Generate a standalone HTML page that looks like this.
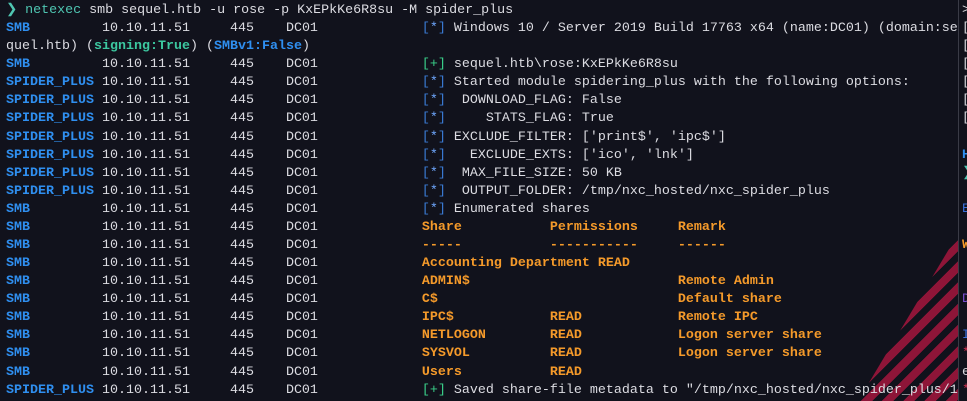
<!DOCTYPE html>
<html><head><meta charset="utf-8"><style>
html,body{margin:0;padding:0;background:#11121c;width:967px;height:401px;overflow:hidden}
pre{position:absolute;left:6px;top:2px;margin:0;font-family:"Liberation Mono",monospace;font-size:13.33px;line-height:18.08px;color:#dcdce2;z-index:2;white-space:pre}
.b{color:#2f8ff0;font-weight:bold}
.k{color:#3a7bd5}.s{color:#6fa8ff}
.g{color:#3ad08a}
.t{color:#3cc8a0;font-weight:bold}
.o{color:#f59a2a;font-weight:bold}
.p{color:#4fc6b2}
#stripes{position:absolute;left:858px;top:234px;width:100px;height:167px;clip-path:polygon(0 100%,100% 0,100% 100%);background:repeating-linear-gradient(135deg,#8e1538 0 8px,#11121c 8px 15px);z-index:1}
#div{position:absolute;left:958px;top:0;width:1px;height:401px;background:#3a3b46}
#sb{position:absolute;left:955px;top:240px;width:3px;height:52px;background:#8a8a90}
#r{position:absolute;left:962px;top:2px;font-family:"Liberation Mono",monospace;font-size:13.33px;line-height:18.08px;color:#d6d6dc;white-space:pre;margin:0}
</style></head><body>
<div id="stripes"></div><div id="div"></div><div id="sb"></div>
<pre><span class="p">❯</span> <span class="p">netexec</span> smb sequel.htb -u rose -p KxEPkKe6R8su -M spider_plus
<span class="b">SMB</span>         10.10.11.51     445    DC01             <span class="k">[</span><span class="s">*</span><span class="k">]</span> Windows 10 / Server 2019 Build 17763 x64 (name:DC01) (domain:se
quel.htb) (<span class="t">signing:True</span>) (<span class="b">SMBv1:False</span>)
<span class="b">SMB</span>         10.10.11.51     445    DC01             <span class="g">[+]</span> sequel.htb\rose:KxEPkKe6R8su
<span class="b">SPIDER_PLUS</span> 10.10.11.51     445    DC01             <span class="k">[</span><span class="s">*</span><span class="k">]</span> Started module spidering_plus with the following options:
<span class="b">SPIDER_PLUS</span> 10.10.11.51     445    DC01             <span class="k">[</span><span class="s">*</span><span class="k">]</span>  DOWNLOAD_FLAG: False
<span class="b">SPIDER_PLUS</span> 10.10.11.51     445    DC01             <span class="k">[</span><span class="s">*</span><span class="k">]</span>     STATS_FLAG: True
<span class="b">SPIDER_PLUS</span> 10.10.11.51     445    DC01             <span class="k">[</span><span class="s">*</span><span class="k">]</span> EXCLUDE_FILTER: ['print$', 'ipc$']
<span class="b">SPIDER_PLUS</span> 10.10.11.51     445    DC01             <span class="k">[</span><span class="s">*</span><span class="k">]</span>   EXCLUDE_EXTS: ['ico', 'lnk']
<span class="b">SPIDER_PLUS</span> 10.10.11.51     445    DC01             <span class="k">[</span><span class="s">*</span><span class="k">]</span>  MAX_FILE_SIZE: 50 KB
<span class="b">SPIDER_PLUS</span> 10.10.11.51     445    DC01             <span class="k">[</span><span class="s">*</span><span class="k">]</span>  OUTPUT_FOLDER: /tmp/nxc_hosted/nxc_spider_plus
<span class="b">SMB</span>         10.10.11.51     445    DC01             <span class="k">[</span><span class="s">*</span><span class="k">]</span> Enumerated shares
<span class="b">SMB</span>         10.10.11.51     445    DC01             <span class="o">Share           Permissions     Remark</span>
<span class="b">SMB</span>         10.10.11.51     445    DC01             <span class="o">-----           -----------     ------</span>
<span class="b">SMB</span>         10.10.11.51     445    DC01             <span class="o">Accounting Department READ</span>
<span class="b">SMB</span>         10.10.11.51     445    DC01             <span class="o">ADMIN$                          Remote Admin</span>
<span class="b">SMB</span>         10.10.11.51     445    DC01             <span class="o">C$                              Default share</span>
<span class="b">SMB</span>         10.10.11.51     445    DC01             <span class="o">IPC$            READ            Remote IPC</span>
<span class="b">SMB</span>         10.10.11.51     445    DC01             <span class="o">NETLOGON        READ            Logon server share</span>
<span class="b">SMB</span>         10.10.11.51     445    DC01             <span class="o">SYSVOL          READ            Logon server share</span>
<span class="b">SMB</span>         10.10.11.51     445    DC01             <span class="o">Users           READ</span>
<span class="b">SPIDER_PLUS</span> 10.10.11.51     445    DC01             <span class="g">[+]</span> Saved share-file metadata to "/tmp/nxc_hosted/nxc_spider_plus/1</pre>
<pre id="r">&gt;
[
[
[
[
[
[

<span class="b">H</span>
<span class="p">❯</span>

<span style="color:#3a6fd8">E</span>

<span class="o">W</span>


<span style="color:#7a4fd0">D</span>

<span style="color:#3a6fd8">I</span>
<span style="color:#d03050">*</span>
e
<span style="color:#d03050">*</span></pre>
</body></html>
